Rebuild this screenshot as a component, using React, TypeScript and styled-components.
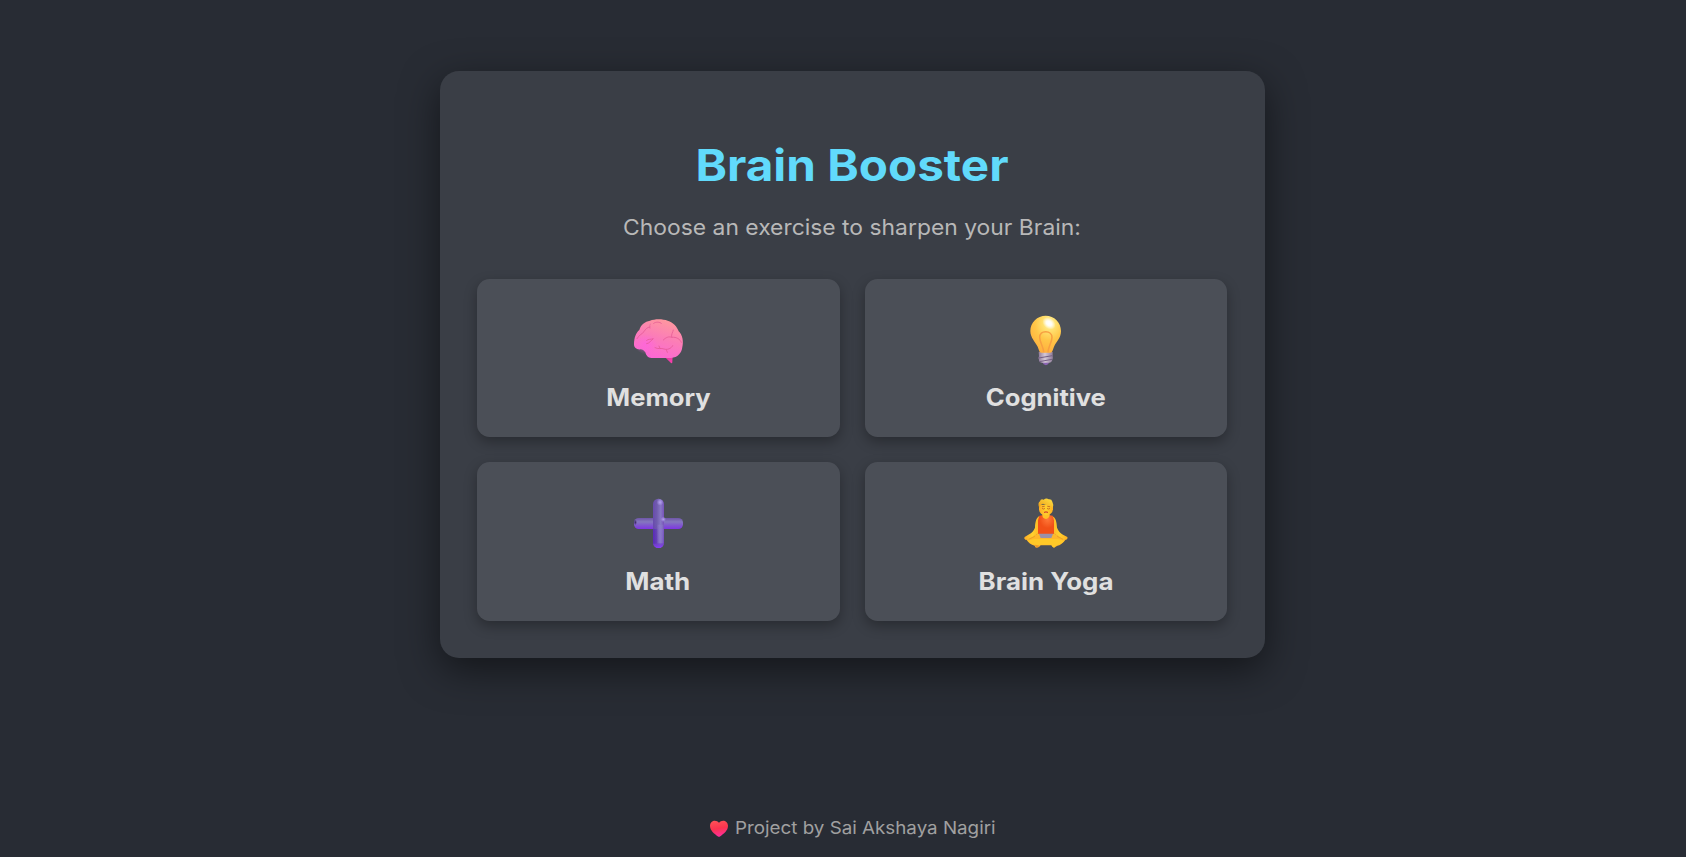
import React from "react";
import styled, { createGlobalStyle } from "styled-components";

const GlobalStyle = createGlobalStyle`
  * { box-sizing: border-box; }
  html, body { margin: 0; background: #282c34; }
  body { font-family: Inter, "Open Sans", sans-serif; overflow: hidden; }
`;

const Page = styled.div`
  height: 857px;
  display: flex;
  flex-direction: column;
  align-items: center;
  padding: 71px 0 0 19px;
  background: #282c34;
`;

const Panel = styled.main`
  width: 825px;
  height: 587px;
  padding: 65px 38px 37px 37px;
  border-radius: 19px;
  background: #3a3e46;
  box-shadow: 0 12px 38px rgba(0, 0, 0, 0.5);
  text-align: center;
`;

const Title = styled.h1`
  margin: 0;
  height: 58px;
  line-height: 58px;
  font-size: 43.5px;
  font-weight: 700;
  transform: scaleX(1.095);
  color: #61dafb;
  white-space: nowrap;
`;

const Subtitle = styled.p`
  margin: 18px 0 0;
  height: 30px;
  line-height: 30px;
  font-size: 21.6px;
  transform: scaleX(1.059);
  color: #b8b8b8;
  white-space: nowrap;
`;

const Grid = styled.div`
  margin-top: 37px;
  display: grid;
  grid-template-columns: 1fr 1fr;
  grid-template-rows: 158.4px 158.6px;
  gap: 25px;
`;

const Card = styled.button`
  border: 0;
  padding: 36px 0 0;
  display: flex;
  flex-direction: column;
  align-items: center;
  border-radius: 12.5px;
  background: #4b4f57;
  box-shadow: 0 5px 12.5px rgba(0, 0, 0, 0.3);
  color: #e0e0e0;
  font: inherit;
`;

const Icon = styled.svg`
  display: block;
  width: 50px;
  height: 50px;
  overflow: visible;
`;

const CardLabel = styled.span<{ $stretch: number }>`
  margin-top: 17.3px;
  height: 32px;
  line-height: 32px;
  font-size: 23.8px;
  font-weight: 700;
  transform: scaleX(${(p) => p.$stretch});
  white-space: nowrap;
`;

const Footer = styled.footer`
  margin-top: 157px;
  padding-right: 18px;
  display: flex;
  align-items: center;
  height: 26px;
`;

const Heart = styled.svg`
  width: 18px;
  height: 17px;
  margin-right: 7px;
`;

const Credit = styled.span`
  font-size: 17.4px;
  line-height: 26px;
  transform: scaleX(1.08);
  transform-origin: left center;
  color: #a0a0a0;
  white-space: nowrap;
`;

const BrainIcon = () => (
  <Icon viewBox="39 30 150 150">
    <defs>
      <linearGradient id="brain" x1="0.75" y1="0" x2="0.35" y2="1">
        <stop offset="0" stopColor="#ff9a9c" />
        <stop offset="0.5" stopColor="#fb7cb8" />
        <stop offset="1" stopColor="#fc66d6" />
      </linearGradient>
      <radialGradient id="brainGlow">
        <stop offset="0" stopColor="#ff62e0" />
        <stop offset="1" stopColor="#ff62e0" stopOpacity="0" />
      </radialGradient>
      <linearGradient id="stem" x1="0" y1="0" x2="1" y2="1">
        <stop offset="0" stopColor="#d8349b" />
        <stop offset="1" stopColor="#ff3fae" />
      </linearGradient>
    </defs>
    <path d="M132 154L153 174Q157 176 157 170L158 152Z" fill="url(#stem)" />
    <path d="M42 118C42 98 48 83 58 75C62 60 75 49 90 47C104 41 128 41 143 47C160 52 172 66 176 79C188 90 191 111 187 126C185 145 173 157 153 159L94 159C84 159 78 151 76 142C71 136 68 133 62 133C50 134 42 129 42 118Z" fill="url(#brain)" />
    <ellipse cx="78" cy="118" rx="34" ry="30" fill="url(#brainGlow)" opacity="0.7" />
    <g fill="none" stroke="#e35893" strokeOpacity="0.75" strokeLinecap="round" strokeWidth="3">
      <path d="M51 101C57 90 65 88 72 80C77 72 81 67 90 66" />
      <path d="M91 57C88 62 89 67 90 70" strokeWidth="2" />
      <path d="M101 55C109 49 119 51 124 55" />
      <path d="M80 106C86 101 92 104 100 101C91 108 89 115 80 116" />
      <path d="M130 105C139 96 147 94 155 97C169 95 181 103 184 112" />
      <path d="M155 96C153 87 159 82 160 75" />
      <path d="M105 128C115 134 124 128 132 132C142 135 154 131 158 122" />
      <path d="M117 123L120 130M139 134L142 142" />
    </g>
  </Icon>
);

const BulbIcon = () => (
  <Icon viewBox="48 29 150 150">
    <defs>
      <radialGradient id="glass" cx="0.62" cy="0.2" r="0.85">
        <stop offset="0" stopColor="#fff3ae" />
        <stop offset="0.25" stopColor="#ffe06f" />
        <stop offset="0.55" stopColor="#ffc648" />
        <stop offset="1" stopColor="#ffad3c" />
      </radialGradient>
      <radialGradient id="shine">
        <stop offset="0" stopColor="#fff" />
        <stop offset="0.4" stopColor="#fff" stopOpacity="0.9" />
        <stop offset="1" stopColor="#fff" stopOpacity="0" />
      </radialGradient>
      <linearGradient id="screw">
        <stop offset="0" stopColor="#8b7797" />
        <stop offset="0.45" stopColor="#d5c8d7" />
        <stop offset="1" stopColor="#8f7b99" />
      </linearGradient>
    </defs>
    <path d="M110 168H135L129 177Q123 182 116 177Z" fill="#8b65b3" />
    <path d="M101 140H143V153Q145 158 142 163Q141 171 132 172H112Q101 171 102 163Q98 158 102 153Z" fill="url(#screw)" />
    <path d="M101 158L142 151M103 169L141 162" stroke="#756184" strokeWidth="3" fill="none" />
    <path d="M122 31C97 31 76 51 76 77C76 97 91 110 98 124L103 138Q104 142 109 142H136Q140 142 142 138L147 124C154 109 168 98 168 77C168 51 148 31 122 31Z" fill="url(#glass)" />
    <path d="M116 141C116 125 104 112 104 96C104 85 112 79 122 79C133 79 141 86 141 96C141 112 129 125 129 141" fill="none" stroke="#f79f42" strokeWidth="4.5" />
    <ellipse cx="132" cy="54" rx="22" ry="16" transform="rotate(38 132 54)" fill="url(#shine)" />
  </Icon>
);

const PlusIcon = () => (
  <Icon viewBox="39 30 150 150">
    <defs>
      <linearGradient id="plusH" x1="0" y1="0" x2="0" y2="1">
        <stop offset="0" stopColor="#6e55a7" />
        <stop offset="0.35" stopColor="#8577bf" />
        <stop offset="0.65" stopColor="#8058cd" />
        <stop offset="1" stopColor="#7e35e4" />
      </linearGradient>
      <linearGradient id="plusV">
        <stop offset="0" stopColor="#684bad" />
        <stop offset="0.35" stopColor="#705bae" />
        <stop offset="0.7" stopColor="#8877c4" />
        <stop offset="1" stopColor="#7652b9" />
      </linearGradient>
      <linearGradient id="plusBase" x1="0" y1="0" x2="0" y2="1">
        <stop offset="0.5" stopColor="#5627b2" stopOpacity="0" />
        <stop offset="0.88" stopColor="#632dc2" stopOpacity="0.4" />
        <stop offset="1" stopColor="#8b3bff" />
      </linearGradient>
      <linearGradient id="plusLeft">
        <stop offset="0" stopColor="#5a2bb8" />
        <stop offset="1" stopColor="#5a2bb8" stopOpacity="0" />
      </linearGradient>
      <linearGradient id="plusRight">
        <stop offset="0" stopColor="#8b78c9" stopOpacity="0" />
        <stop offset="0.5" stopColor="#8b78c9" />
        <stop offset="1" stopColor="#8b78c9" stopOpacity="0.3" />
      </linearGradient>
      <radialGradient id="plusTip">
        <stop offset="0" stopColor="#b5a0f1" />
        <stop offset="1" stopColor="#b5a0f1" stopOpacity="0" />
      </radialGradient>
      <radialGradient id="plusEdge">
        <stop offset="0" stopColor="#38225f" />
        <stop offset="1" stopColor="#38225f" stopOpacity="0" />
      </radialGradient>
    </defs>
    <rect x="42" y="90" width="147" height="33" rx="14" fill="url(#plusH)" />
    <ellipse cx="46" cy="103" rx="5" ry="9" fill="url(#plusEdge)" />
    <rect x="99" y="32" width="33" height="148" rx="16" fill="url(#plusV)" />
    <rect x="99" y="32" width="33" height="148" rx="16" fill="url(#plusBase)" />
    <rect x="99" y="123" width="16" height="44" fill="url(#plusLeft)" />
    <rect x="110" y="110" width="21" height="56" fill="url(#plusRight)" />
    <circle cx="120" cy="43" r="10" fill="url(#plusTip)" />
    <circle cx="130" cy="94" r="8" fill="url(#plusTip)" />
  </Icon>
);

const YogaIcon = () => (
  <Icon viewBox="48 30 150 150">
    <defs>
      <linearGradient id="skin">
        <stop offset="0" stopColor="#ffac25" />
        <stop offset="0.5" stopColor="#ffd02e" />
        <stop offset="1" stopColor="#ffb020" />
      </linearGradient>
      <radialGradient id="shirt" cx="0.6" cy="0.2">
        <stop offset="0" stopColor="#ff7939" />
        <stop offset="1" stopColor="#f15017" />
      </radialGradient>
      <linearGradient id="hair" x1="0" y1="1" x2="1" y2="0">
        <stop offset="0" stopColor="#ee9b17" />
        <stop offset="1" stopColor="#ffe443" />
      </linearGradient>
    </defs>
    <path d="M103 84C94 89 91 100 90 119Q84 134 70 140L59 147Q55 151 61 155L69 156Q85 147 101 136L108 101Z" fill="url(#skin)" />
    <path d="M141 84C152 88 155 101 156 119Q162 134 174 140L187 147Q190 151 184 155L177 156Q161 147 145 136L137 101Z" fill="url(#skin)" />
    <path d="M65 156L100 136H146L181 156Q169 172 157 173L151 177Q145 182 139 172H107Q101 181 91 178L89 173Q72 168 65 156Z" fill="#ffb82a" />
    <path d="M68 158L87 153H159L178 158Q169 169 151 173Q149 181 144 178L139 170H107L92 172Q77 169 68 158Z" fill="#ffc928" />
    <path d="M90 170L103 173Q99 182 92 177Z" fill="#ee982a" />
    <path d="M71 154L90 145M174 154L156 145" stroke="#eea425" strokeWidth="3" fill="none" />
    <path d="M101 135H145L139 150H107Z" fill="#9b91a7" />
    <path d="M103 83L112 82Q123 94 134 82L143 83L147 97V137H99V97Z" fill="url(#shirt)" />
    <path d="M112 73H134V82Q132 92 123 93Q112 91 112 82Z" fill="#ffc128" />
    <path d="M102 50H144V64Q142 81 123 82Q104 81 102 65Z" fill="url(#skin)" />
    <path d="M103 60Q97 45 105 40Q107 31 116 35Q124 28 131 34Q140 33 142 41Q147 49 143 61Q140 52 134 53Q121 52 114 47Q106 49 103 60Z" fill="url(#hair)" />
    <g fill="none" stroke="#bd6424" strokeWidth="2.5" strokeLinecap="round">
      <path d="M112 62Q116 65 119 62M127 62Q131 65 134 62M112 56L118 55M128 55L134 56" />
      <path d="M119 73Q123 70 127 73" stroke="#d0442d" strokeWidth="4" />
    </g>
  </Icon>
);

const exercises = [
  { label: "Memory", stretch: 1.075, Art: BrainIcon },
  { label: "Cognitive", stretch: 1.075, Art: BulbIcon },
  { label: "Math", stretch: 1.09, Art: PlusIcon },
  { label: "Brain Yoga", stretch: 1.087, Art: YogaIcon },
];

export default function App() {
  return (
    <Page>
      <GlobalStyle />
      <Panel>
        <Title>Brain Booster</Title>
        <Subtitle>Choose an exercise to sharpen your Brain:</Subtitle>
        <Grid>
          {exercises.map(({ label, stretch, Art }) => (
            <Card key={label} type="button">
              <Art />
              <CardLabel $stretch={stretch}>{label}</CardLabel>
            </Card>
          ))}
        </Grid>
      </Panel>
      <Footer>
        <Heart viewBox="0 0 54 50">
          <defs>
            <linearGradient id="heart" x1="0.3" y1="0" x2="0.5" y2="1">
              <stop offset="0" stopColor="#ff5157" />
              <stop offset="0.5" stopColor="#fa344f" />
              <stop offset="1" stopColor="#ff2e9f" />
            </linearGradient>
          </defs>
          <path d="M27 8C20-2 1-1 0 17C0 32 13 41 24 49Q27 51 30 49C41 41 54 32 54 17C53-1 34-2 27 8Z" fill="url(#heart)" />
        </Heart>
        <Credit>Project by Sai Akshaya Nagiri</Credit>
      </Footer>
    </Page>
  );
}
